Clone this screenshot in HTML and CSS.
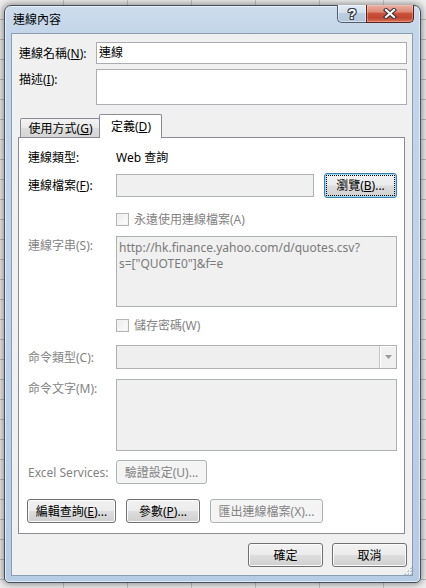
FILE: index.html
```html
<!DOCTYPE html>
<html lang="zh-Hant">
<head>
<meta charset="utf-8">
<title>連線內容</title>
<link rel="stylesheet" href="styles.css">
</head>
<body>
<div class="window">
  <div class="titlebar">
    <span class="title">連線內容</span>
    <div class="caption">
      <div class="cap-btn help"><span class="qmark">?</span></div>
      <div class="cap-btn close">
        <svg width="14" height="11" viewBox="0 0 14 11"><path d="M3 2 L11 9 M11 2 L3 9" stroke="#2e3034" stroke-width="4.2" stroke-linecap="square" fill="none"/><path d="M3 2 L11 9 M11 2 L3 9" stroke="#ffffff" stroke-width="2.2" stroke-linecap="square" fill="none"/></svg>
      </div>
    </div>
  </div>
  <div class="client">
    <div class="top-form">
      <span class="lbl">連線名稱(<u>N</u>):</span>
      <div class="textbox name">連線</div>
      <span class="lbl lbl-top">描述(<u>I</u>):</span>
      <div class="textbox desc"></div>
    </div>
    <div class="tabs">
      <div class="tab">使用方式(<u>G</u>)</div>
      <div class="tab selected">定義(<u>D</u>)</div>
    </div>
    <div class="panel">
      <div class="prow r1"><span class="lbl">連線類型:</span><span class="val">Web 查詢</span></div>
      <div class="prow r2">
        <span class="lbl">連線檔案(<u>F</u>):</span>
        <div class="field">
          <div class="textbox ro file"></div>
          <div class="btn focused browse"><span class="focus-rect">瀏覽(<u>B</u>)...</span></div>
        </div>
      </div>
      <div class="prow r3"><span></span><span class="check dis"><span class="box"></span>永遠使用連線檔案(A)</span></div>
      <div class="prow r4 top"><span class="lbl dis lbl-area">連線字串(S):</span><div class="textbox ro area url"><span class="url-line">http://hk.finance.yahoo.com/d/quotes.csv?</span><span class="url-line">s=["QUOTE0"]&amp;f=e</span></div></div>
      <div class="prow r5"><span></span><span class="check dis"><span class="box"></span>儲存密碼(W)</span></div>
      <div class="prow r6">
        <span class="lbl dis">命令類型(C):</span>
        <div class="combo"><span class="combo-text"></span><span class="combo-btn"><svg width="7" height="4" viewBox="0 0 7 4"><path d="M0 0 H7 L3.5 4 Z" fill="#9b9b9b"/></svg></span></div>
      </div>
      <div class="prow r7 top"><span class="lbl dis lbl-area">命令文字(M):</span><div class="textbox ro area"></div></div>
      <div class="prow r8"><span class="lbl dis">Excel Services:</span><div class="btn disabled auth">驗證設定(U)...</div></div>
      <div class="btnrow r9">
        <div class="btn edit">編輯查詢(<u>E</u>)...</div>
        <div class="btn params">參數(<u>P</u>)...</div>
        <div class="btn disabled export">匯出連線檔案(X)...</div>
      </div>
    </div>
    <div class="footer">
      <div class="btn dlg">確定</div>
      <div class="btn dlg">取消</div>
    </div>
    <svg class="grip" width="10" height="10" viewBox="0 0 10 10">
      <g fill="#b9c2cc"><rect x="8" y="2" width="2" height="2"/><rect x="5" y="5" width="2" height="2"/><rect x="8" y="5" width="2" height="2"/><rect x="2" y="8" width="2" height="2"/><rect x="5" y="8" width="2" height="2"/><rect x="8" y="8" width="2" height="2"/></g>
      <g fill="#ffffff"><rect x="8" y="2" width="1" height="1"/><rect x="5" y="5" width="1" height="1"/><rect x="8" y="5" width="1" height="1"/><rect x="2" y="8" width="1" height="1"/><rect x="5" y="8" width="1" height="1"/><rect x="8" y="8" width="1" height="1"/></g>
    </svg>
  </div>
</div>
</body>
</html>
```

FILE: styles.css
```css
* { box-sizing: border-box; }
html, body { margin: 0; padding: 0; }
body {
  width: 426px;
  height: 588px;
  overflow: hidden;
  padding: 5px 0 0 4px;
  background-color: #eeeeee;
  background-image:
    repeating-linear-gradient(to bottom, transparent 0 19px, #bdbdbd 19px 20px),
    repeating-linear-gradient(to right, transparent 0 63px, #c4c4c4 63px 64px);
  font-family: "Noto Sans", "Noto Sans CJK TC", sans-serif;
  font-size: 12px;
  line-height: 15px;
  color: #000;
}
u { text-decoration: underline; text-underline-offset: 1px; }

.window {
  width: 417px;
  height: 578px;
  border: 1px solid #444d59;
  border-radius: 7px 7px 5px 5px;
  background: linear-gradient(to bottom, #cddcec 0, #c3d5e9 27px, #bcd1e8 60%, #b6cce5 100%);
  box-shadow: 0 0 7px 1px rgba(0,0,0,0.45), inset 0 0 0 1px rgba(255,255,255,0.6);
  padding: 0 7px 6px 6px;
  display: flex;
  flex-direction: column;
}

.titlebar {
  height: 27px;
  display: flex;
  justify-content: space-between;
  align-items: flex-start;
  flex: none;
}
.title {
  margin-top: 6px;
  padding-left: 2px;
  color: #000;
}
.caption {
  display: flex;
  margin-right: -1px;
  margin-top: -1px;
  height: 18px;
}
.cap-btn {
  height: 18px;
  display: flex;
  align-items: center;
  justify-content: center;
  border: 1px solid #4f5d6f;
  border-top: none;
}
.help {
  width: 29px;
  border-right: none;
  border-radius: 0 0 0 5px;
  background: linear-gradient(to bottom, #e2ebf4 0%, #d3e0ed 45%, #bccde0 50%, #b4c6db 100%);
  box-shadow: inset 0 0 0 1px rgba(255,255,255,0.45);
}
.qmark {
  font-family: "Liberation Sans", sans-serif;
  font-weight: bold;
  font-size: 14px;
  line-height: 14px;
  color: #ffffff;
  text-shadow: 1px 0 #3a4350, -1px 0 #3a4350, 0 1px #3a4350, 0 -1px #3a4350, 1px 1px #3a4350, -1px -1px #3a4350, 1px -1px #3a4350, -1px 1px #3a4350;
}
.close {
  width: 48px;
  border-radius: 0 0 5px 0;
  border-color: #5a2219;
  background: linear-gradient(to bottom, #eab0a3 0%, #df8a79 40%, #c9533d 50%, #c14530 75%, #d77258 100%);
  box-shadow: inset 0 0 0 1px rgba(255,220,210,0.35);
}

.client {
  flex: 1;
  position: relative;
  border: 1px solid #8b9db2;
  background: #f0f0f0;
  padding: 8px 5px 0 6px;
  display: flex;
  flex-direction: column;
}

.top-form {
  display: grid;
  grid-template-columns: 77px 1fr;
  grid-template-rows: 22px 36px;
  row-gap: 5px;
  align-items: center;
  padding-left: 1px;
}
.lbl { white-space: nowrap; }
.lbl-top { align-self: start; padding-top: 3px; }
.textbox {
  border: 1px solid #abadb3;
  background: #ffffff;
  height: 100%;
}
.textbox.name { padding: 2px 0 0 2px; }
.textbox.ro { background: #f0f0f0; border-color: #adb2b5; }

.tabs {
  margin-top: 9px;
  height: 23px;
  display: flex;
  align-items: flex-end;
  padding-left: 2px;
  flex: none;
}
.tab {
  height: 19px;
  width: 80px;
  border: 1px solid #898c95;
  border-bottom: none;
  border-radius: 2px 2px 0 0;
  background: linear-gradient(to bottom, #f3f3f3 0%, #e9e9e9 50%, #dddddd 51%, #d5d5d5 100%);
  display: flex;
  align-items: center;
  justify-content: center;
  padding-left: 1px;
}
.tab.selected {
  width: 63px;
  height: 24px;
  margin-left: -1px;
  margin-bottom: -1px;
  background: #ffffff;
  position: relative;
  z-index: 1;
  padding-bottom: 1px;
}

.panel {
  flex: none;
  height: 397px;
  margin-right: 2px;
  border: 1px solid #898c95;
  background: #ffffff;
  padding: 0 7px 0 9px;
  display: flex;
  flex-direction: column;
}
.prow {
  display: grid;
  grid-template-columns: 88px 1fr;
  align-items: center;
}
.prow.top { align-items: start; }
.lbl-area { padding-top: 2px; }
.dis { color: #838383; }
.r1 { margin-top: 8px; height: 22px; }
.r2 { margin-top: 5px; height: 25px; }
.r3 { margin-top: 15px; height: 13px; }
.r4 { margin-top: 10px; height: 71px; }
.r5 { margin-top: 12px; height: 13px; }
.r6 { margin-top: 13px; height: 24px; }
.r7 { margin-top: 10px; height: 72px; }
.r8 { margin-top: 9px; height: 24px; }
.r9 { margin-top: 15px; height: 24px; }

.field {
  display: flex;
  align-items: center;
  gap: 10px;
  height: 25px;
}
.textbox.file { width: 198px; height: 23px; }
.area { height: 100%; }
.url {
  color: #7a7a7a;
  padding: 3px 0 0 2px;
  display: flex;
  flex-direction: column;
}
.url-line { display: block; line-height: 15px; height: 15px; }
.url-line + .url-line { margin-top: 1px; }

.check {
  display: flex;
  align-items: center;
  gap: 5px;
  height: 13px;
  white-space: nowrap;
}
.box {
  width: 13px;
  height: 13px;
  flex: none;
  border: 1px solid #b4b4b4;
  background: linear-gradient(135deg, #e9e9e9 0%, #f7f7f7 60%, #fdfdfd 100%);
  box-shadow: inset 0 0 0 1px #f4f4f4;
}

.combo {
  height: 24px;
  border: 1px solid #b0b0b0;
  background: #efefef;
  display: flex;
  justify-content: space-between;
}
.combo-btn {
  width: 17px;
  height: 100%;
  border-left: 1px solid #c4c4c4;
  background: #f0f0f0;
  box-shadow: inset 1px 1px 0 #ffffff;
  display: flex;
  align-items: center;
  justify-content: center;
}

.btn {
  height: 24px;
  border: 1px solid #707070;
  border-radius: 3px;
  background: linear-gradient(to bottom, #f2f2f2 0%, #ebebeb 48%, #dddddd 52%, #cfcfcf 100%);
  box-shadow: inset 0 0 0 1px #fbfbfb;
  display: flex;
  align-items: center;
  justify-content: center;
  white-space: nowrap;
  color: #000;
}
.btn.disabled {
  border-color: #adb2b5;
  background: #f4f4f4;
  box-shadow: none;
  color: #838383;
}
.btn.focused {
  border-color: #3c7fb1;
  box-shadow: inset 0 0 0 1px #9fd9f2;
  background: linear-gradient(to bottom, #f2f2f2 0%, #ebebeb 48%, #dddddd 52%, #d1d1d1 100%);
}
.browse { width: 73px; height: 25px; padding: 1px; }
.focus-rect {
  flex: 1;
  align-self: stretch;
  border: 1px dotted #000;
  display: flex;
  align-items: center;
  justify-content: center;
}
.auth { width: 91px; }

.btnrow {
  display: flex;
  gap: 10px;
  margin-left: -1px;
}
.edit { width: 89px; }
.params { width: 74px; }
.export { width: 113px; }

.footer {
  margin-top: 9px;
  display: flex;
  justify-content: flex-end;
  gap: 9px;
  flex: none;
}
.dlg { width: 75px; }

.grip {
  position: absolute;
  right: 0;
  bottom: 0;
}
```
